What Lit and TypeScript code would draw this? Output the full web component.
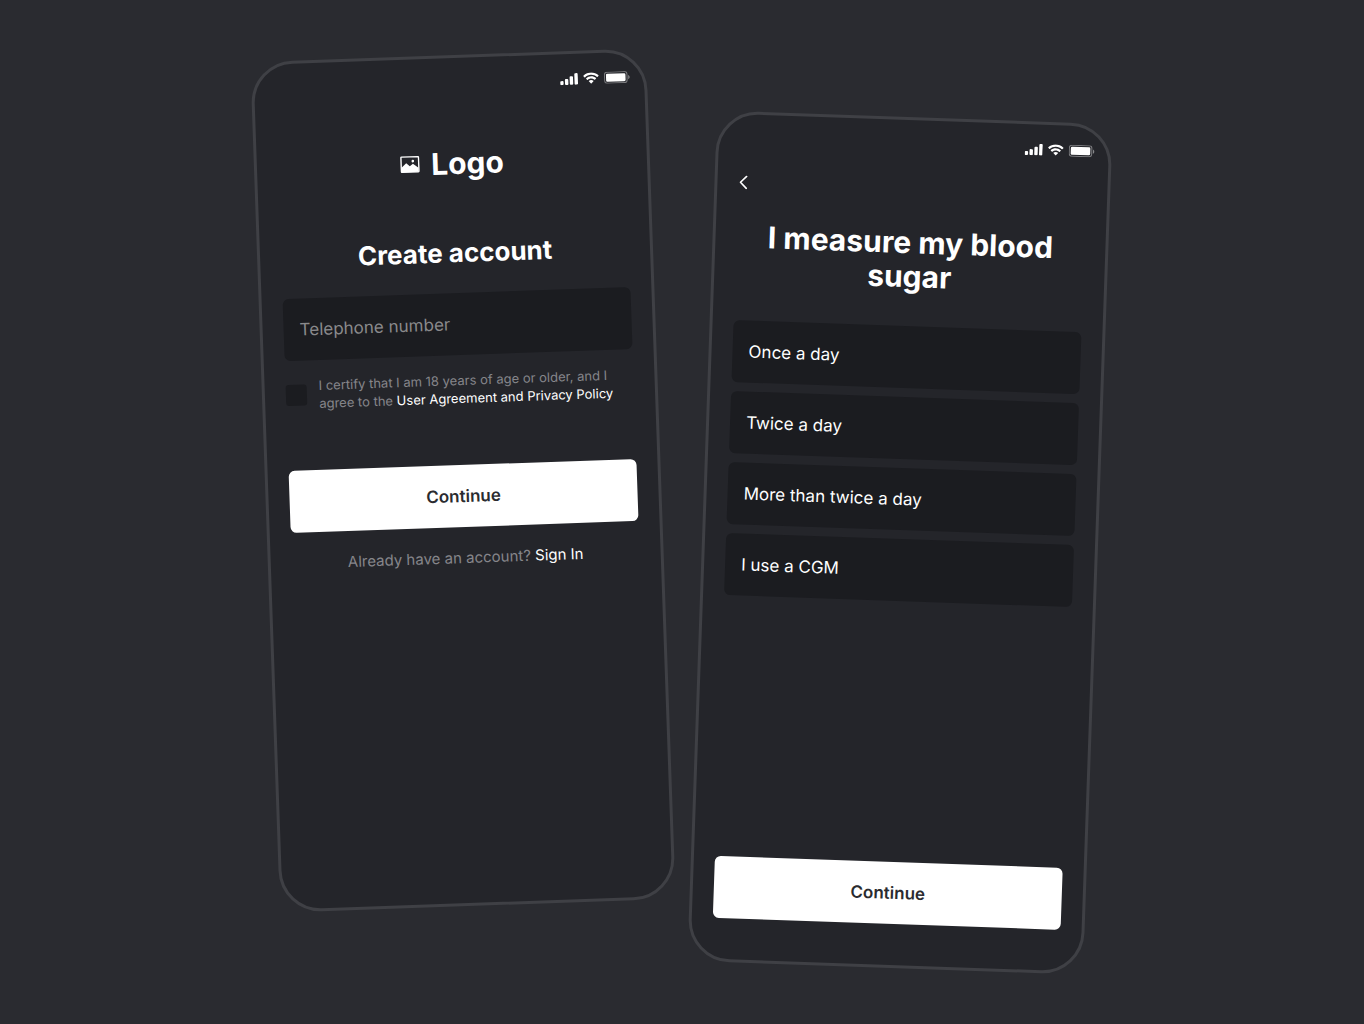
import { LitElement, html, css, svg } from "lit";
import { customElement, state } from "lit/decorators.js";

const shared = css`
  *,
  *::before,
  *::after {
    box-sizing: border-box;
  }
  h1,
  h2,
  p {
    margin: 0;
  }
  button,
  input {
    font-family: inherit;
  }
  .cta {
    display: block;
    width: 100%;
    height: 62px;
    border: 0;
    border-radius: 6px;
    background: #ffffff;
    color: #2a2b2f;
    font-size: 17px;
    font-weight: 600;
    cursor: pointer;
  }
`;

@customElement("status-bar")
class StatusBar extends LitElement {
  static styles = css`
    :host {
      display: flex;
      justify-content: flex-end;
      align-items: center;
      gap: 5px;
      height: 12px;
    }
    svg {
      display: block;
    }
  `;

  render() {
    return html`
      <svg width="18" height="12" viewBox="0 0 18 12" fill="#fff" aria-label="Signal">
        ${[4, 6, 8.5, 11.5].map(
          (h, i) => svg`<rect x=${i * 4.8} y=${11.8 - h} width="3.4" height=${h} rx="1"></rect>`
        )}
      </svg>
      <svg width="16" height="12" viewBox="0 0 16 12" fill="#fff" aria-label="Wi-Fi">
        <path d="M8 2.5c2.3 0 4.4.9 6 2.4.1.1.3.1.4 0l1.2-1.2c.1-.1.1-.3 0-.4-4.2-4-11-4-15.2 0-.1.1-.1.3 0 .4l1.2 1.2c.1.1.3.1.4 0C3.6 3.4 5.7 2.5 8 2.5z"></path>
        <path d="M8 6.3c1.25 0 2.45.47 3.4 1.3.1.12.3.12.43 0l1.17-1.2c.12-.1.12-.3 0-.43-2.82-2.6-7.17-2.6-10 0-.12.13-.12.33 0 .43l1.17 1.2c.12.12.32.12.43 0C5.55 6.77 6.75 6.3 8 6.3z"></path>
        <path d="M10.3 9c.12-.12.12-.32 0-.43-1.33-1.12-3.27-1.12-4.6 0-.12.11-.13.31 0 .43l2.07 2.1c.13.13.33.13.46 0z"></path>
      </svg>
      <svg width="26" height="12" viewBox="0 0 26 12" aria-label="Battery">
        <rect x="0.5" y="0.5" width="22.5" height="11" rx="2.6" fill="none" stroke="#fff" stroke-opacity="0.4"></rect>
        <rect x="2" y="2" width="19.5" height="8" rx="1.3" fill="#fff"></rect>
        <path d="M24.2 4v4.2c.8-.4 1.4-1.2 1.4-2.1s-.6-1.7-1.4-2.1z" fill="#fff" fill-opacity="0.45"></path>
      </svg>
    `;
  }
}

@customElement("signup-screen")
class SignupScreen extends LitElement {
  static styles = [
    shared,
    css`
      :host {
        display: flex;
        flex-direction: column;
      }
      .brand {
        display: flex;
        justify-content: center;
        align-items: center;
        gap: 11px;
        margin-top: 56px;
        line-height: 36px;
        font-size: 30px;
        font-weight: 700;
      }
      .heading {
        margin-top: 56px;
        text-align: center;
        font-size: 26px;
        line-height: 32px;
        font-weight: 700;
      }
      .field {
        width: 100%;
        height: 62px;
        margin-top: 24px;
        padding: 0 16px;
        border: 0;
        border-radius: 6px;
        background: #1b1c20;
        color: #ffffff;
        font-size: 17px;
      }
      .field::placeholder {
        color: #8a8a8c;
        opacity: 1;
      }
      .terms {
        display: flex;
        align-items: center;
        gap: 12px;
        margin-top: 16px;
        font-size: 13px;
        line-height: 18px;
        color: #86868a;
      }
      .check {
        appearance: none;
        flex: none;
        width: 21px;
        height: 21px;
        margin: 0;
        border-radius: 3px;
        background: #1b1c20;
      }
      .check:checked {
        background: #ffffff;
      }
      .link {
        color: #ffffff;
        text-decoration: none;
      }
      .submit {
        margin-top: 58px;
      }
      .signin {
        margin-top: 20px;
        text-align: center;
        font-size: 15px;
        line-height: 22px;
        color: #86868a;
      }
    `,
  ];

  render() {
    return html`
      <div class="brand">
        <svg width="20" height="18" viewBox="0 0 20 18" aria-hidden="true">
          <rect x="1.2" y="1.2" width="17.6" height="15.2" rx="0.6" fill="none" stroke="#fff" stroke-width="1.4"></rect>
          <path d="M1.5 16.5v-4.6L6.3 7.4l3.5 3.3 3.2-2.4 5.5 4v4.2z" fill="#fff"></path>
          <circle cx="13" cy="5.6" r="1.3" fill="#fff"></circle>
        </svg>
        <span>Logo</span>
      </div>
      <h1 class="heading">Create account</h1>
      <input class="field" type="tel" placeholder="Telephone number" aria-label="Telephone number" />
      <div class="terms">
        <input class="check" id="terms" type="checkbox" />
        <label for="terms">
          I certify that I am 18 years of age or older, and I<br />agree to the
          <a class="link" href="#terms">User Agreement and Privacy Policy</a>
        </label>
      </div>
      <button class="cta submit" type="button">Continue</button>
      <p class="signin">Already have an account? <a class="link" href="#signin">Sign In</a></p>
    `;
  }
}

@customElement("measure-screen")
class MeasureScreen extends LitElement {
  static styles = [
    shared,
    css`
      :host {
        display: flex;
        flex-direction: column;
      }
      .back {
        display: flex;
        align-items: center;
        width: 20px;
        height: 20px;
        margin-top: 27px;
        padding: 0;
        border: 0;
        background: none;
        cursor: pointer;
      }
      .heading {
        margin-top: 27px;
        padding: 0 20px;
        text-align: center;
        font-size: 30px;
        line-height: 34px;
        font-weight: 700;
      }
      .options {
        display: flex;
        flex-direction: column;
        gap: 9px;
        margin-top: 33px;
      }
      .option {
        height: 62px;
        padding: 0 16px;
        border: 0;
        border-radius: 6px;
        background: #1b1c20;
        color: #ffffff;
        font-size: 17px;
        font-weight: 400;
        text-align: left;
        cursor: pointer;
      }
      .option[aria-pressed="true"] {
        box-shadow: inset 0 0 0 2px #ffffff;
      }
      .submit {
        margin-top: auto;
      }
    `,
  ];

  @state() private selected = -1;

  private options = ["Once a day", "Twice a day", "More than twice a day", "I use a CGM"];

  render() {
    return html`
      <button class="back" type="button" aria-label="Back">
        <svg width="10" height="14" viewBox="0 0 10 14" fill="none" aria-hidden="true">
          <path d="M8 1 2 7l6 6" stroke="#fff" stroke-width="1.6" stroke-linecap="round" stroke-linejoin="round"></path>
        </svg>
      </button>
      <h2 class="heading">I measure my blood sugar</h2>
      <div class="options">
        ${this.options.map(
          (label, i) => html`
            <button
              class="option"
              type="button"
              aria-pressed=${this.selected === i ? "true" : "false"}
              @click=${() => (this.selected = i)}
            >${label}</button>
          `
        )}
      </div>
      <button class="cta submit" type="button">Continue</button>
    `;
  }
}

@customElement("app-root")
class AppRoot extends LitElement {
  static styles = css`
    :host {
      display: block;
      font-family: "Inter", "Liberation Sans", sans-serif;
      color: #ffffff;
    }
    .stage {
      box-sizing: border-box;
      display: flex;
      justify-content: center;
      align-items: center;
      gap: 41px;
      min-height: 100vh;
      padding: 0 2px 2px 0;
      background: #2a2b30;
      overflow: hidden;
    }
    .phone {
      box-sizing: border-box;
      display: flex;
      flex-direction: column;
      flex: 0 1 396px;
      min-height: 851px;
      padding: 19px 21px 41px;
      border: 3px solid #3f4045;
      border-radius: 42px;
      background: #24252a;
    }
    .left {
      margin-bottom: 62px;
      transform: rotate(-2deg);
    }
    .right {
      margin-top: 62px;
      transform: rotate(2deg);
    }
    .status {
      margin-right: -7px;
    }
    .screen {
      flex: 1;
    }
  `;

  render() {
    return html`
      <main class="stage">
        <section class="phone left">
          <status-bar class="status"></status-bar>
          <signup-screen class="screen"></signup-screen>
        </section>
        <section class="phone right">
          <status-bar class="status"></status-bar>
          <measure-screen class="screen"></measure-screen>
        </section>
      </main>
    `;
  }
}
